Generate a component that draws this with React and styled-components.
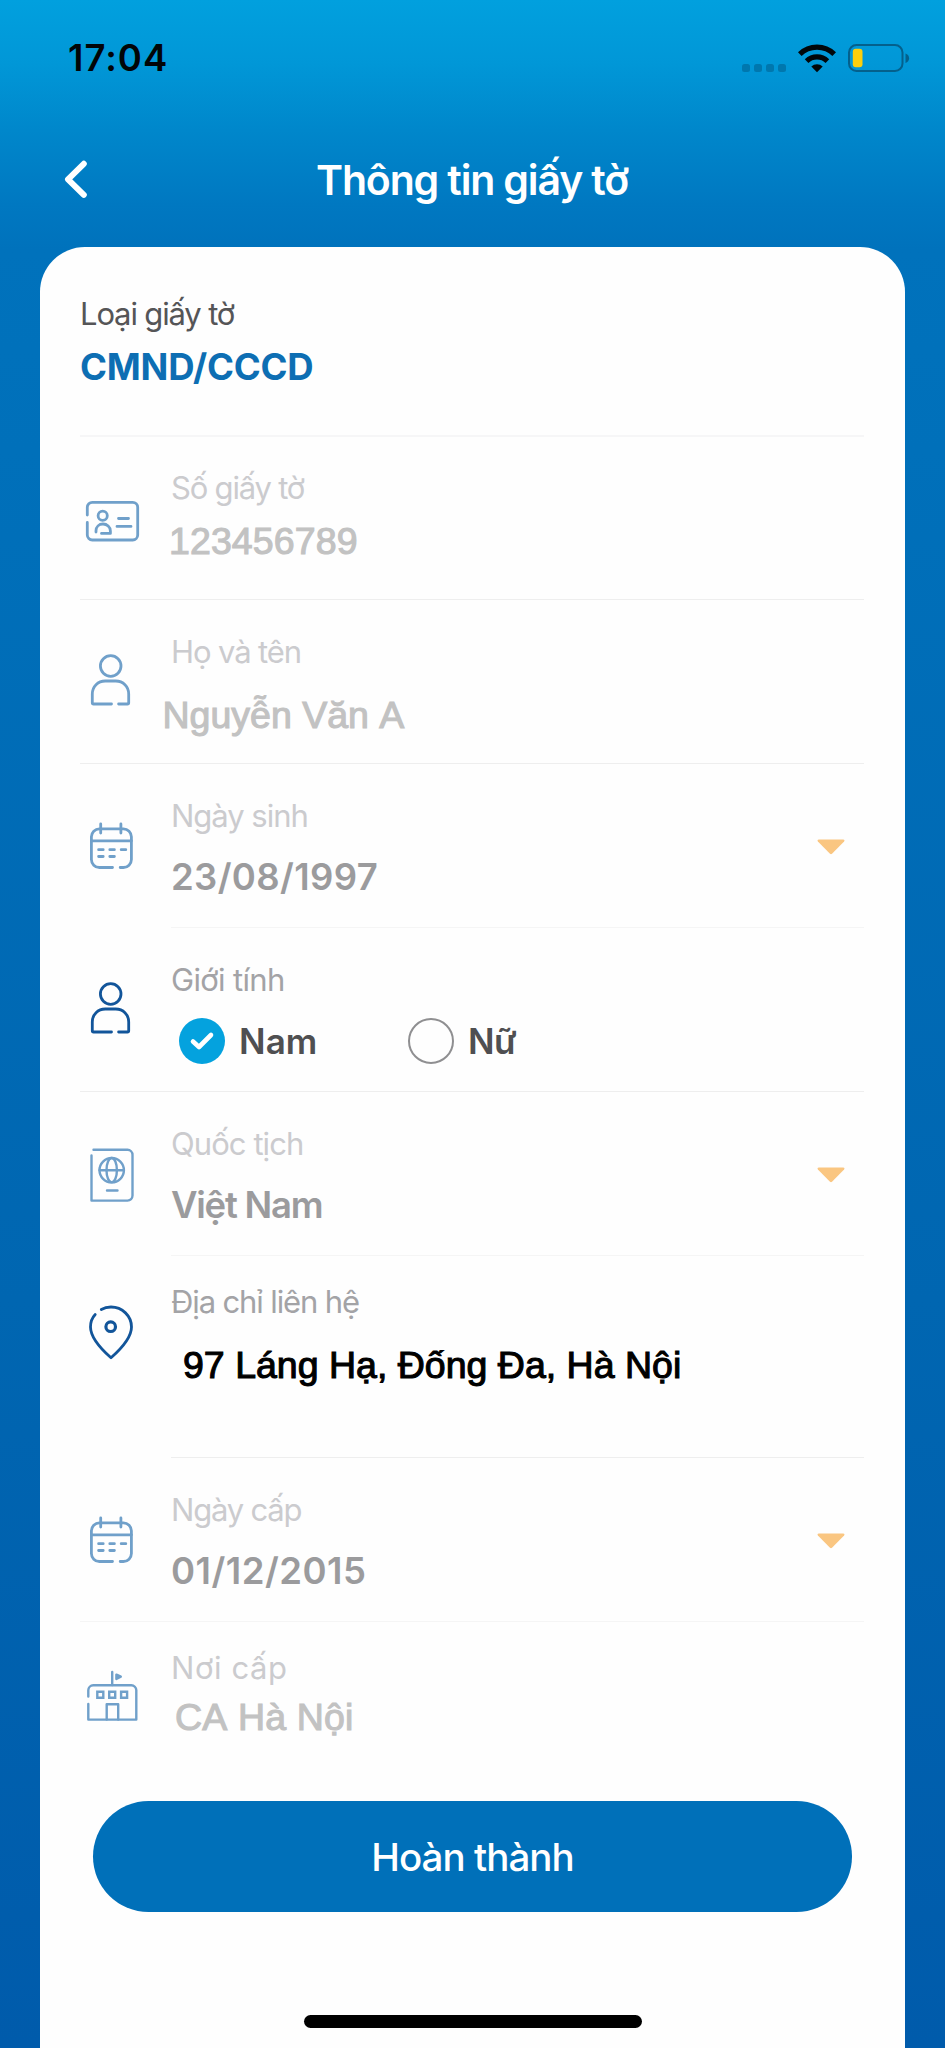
import React from "react";
import styled, { createGlobalStyle } from "styled-components";

const GlobalStyle = createGlobalStyle`
  * { box-sizing: border-box; }
  body {
    margin: 0;
    font-family: Inter, "Liberation Sans", sans-serif;
    background: #005aaa;
  }
`;

const Screen = styled.div`
  width: 945px;
  height: 2048px;
  overflow: hidden;
  display: flex;
  flex-direction: column;
  background: linear-gradient(
    180deg,
    #01a0de 0px,
    #0197d7 64px,
    #0087cb 130px,
    #0078c1 205px,
    #0072bc 250px,
    #0070ba 450px,
    #0066b1 1300px,
    #005bab 2048px
  );
`;

const StatusBar = styled.header`
  height: 116px;
  padding: 0 35px 0 68px;
  display: flex;
  align-items: center;
  justify-content: space-between;
`;

const Clock = styled.span`
  font-size: 36.5px;
  font-weight: 600;
  line-height: 44px;
  letter-spacing: 1px;
  color: #020507;
`;

const StatusIcons = styled.div`
  display: flex;
  align-items: center;
`;

const SignalDots = styled.div`
  display: flex;
  gap: 4px;
  align-self: flex-end;
  margin: 0 12px 1px 0;
`;

const Dot = styled.i`
  width: 8px;
  height: 8px;
  border-radius: 2.5px;
  background: #0077ae;
`;

const NavBar = styled.nav`
  height: 131px;
  padding: 0 0 3px 62px;
  display: grid;
  grid-template-columns: 60px 700px;
  align-items: center;
  svg { display: block; }
`;

const Title = styled.h1`
  margin: 0;
  font-size: 41px;
  font-weight: 600;
  line-height: 50px;
  letter-spacing: -1.14px;
  text-align: center;
  color: #fff;
  white-space: nowrap;
`;

const Card = styled.main`
  flex: 1;
  margin: 0 40px;
  padding: 0 41.5px 0 40px;
  border-radius: 45px 45px 0 0;
  background: #fefefe;
  display: flex;
  flex-direction: column;
`;

const DocType = styled.section`
  height: 188px;
  padding-top: 47px;
`;

const Label = styled.div`
  font-size: 31px;
  line-height: 40px;
  letter-spacing: ${(p) => p.$spacing ?? -1.12}px;
  color: ${(p) => p.$color ?? "#cbcbce"};
  white-space: nowrap;
`;

const Value = styled.div`
  margin-top: ${(p) => p.$gap}px;
  font-size: 36.5px;
  font-weight: ${(p) => p.$weight ?? 600};
  line-height: 44px;
  letter-spacing: ${(p) => p.$spacing ?? 0.35}px;
  color: ${(p) => p.$color ?? "#9b9b9d"};
  white-space: nowrap;
`;

const InputValue = styled.div`
  margin: ${(p) => p.$gap}px 0 0 ${(p) => p.$shift ?? 0}px;
  font-family: "Liberation Sans", Arial, sans-serif;
  font-size: 37.5px;
  line-height: 44px;
  letter-spacing: ${(p) => p.$spacing ?? 0}px;
  font-kerning: none;
  color: #c2c2c2;
  -webkit-text-stroke: 1.1px currentColor;
  white-space: nowrap;
`;

const AddressInput = styled(InputValue)`
  width: 498px;
  height: 47px;
  line-height: 31px;
  overflow: hidden;
  color: #000;
`;

const Divider = styled.hr`
  flex: none;
  height: ${(p) => p.$size ?? 1}px;
  margin: 0 0 0 ${(p) => (p.$inset ? 91 : 0)}px;
  border: 0;
  background: ${(p) => p.$color ?? "#eeeeee"};
`;

const Row = styled.section`
  flex: none;
  height: ${(p) => p.$height ?? 163}px;
  display: grid;
  grid-template-columns: 91px 1fr auto;
`;

const IconCell = styled.div`
  padding: ${(p) => p.$top}px 0 0 1px;
  color: ${(p) => (p.$active ? "#12559a" : "#70a0ca")};
  svg { display: block; overflow: visible; }
`;

const Field = styled.div`
  padding-top: ${(p) => p.$top ?? 32}px;
`;

const CaretCell = styled.div`
  padding: 75px 19px 0 0;
  svg { display: block; }
`;

const Options = styled.div`
  margin: 18px 0 0 8px;
  display: grid;
  grid-template-columns: 229px auto;
`;

const Option = styled.label`
  display: flex;
  align-items: center;
  gap: 14px;
  height: 46px;
  font-size: 35px;
  font-weight: 600;
  letter-spacing: ${(p) => p.$spacing}px;
  color: #4f4f51;
`;

const Radio = styled.span`
  width: 46px;
  height: 46px;
  border-radius: 50%;
  display: flex;
  align-items: center;
  justify-content: center;
  background: ${(p) => (p.$checked ? "#04a2de" : "transparent")};
  border: ${(p) => (p.$checked ? "0" : "2px solid #8f8f91")};
`;

const SubmitButton = styled.button`
  flex: none;
  width: 759px;
  height: 111px;
  margin: 0 0 0 13px;
  padding: 0;
  border: 0;
  border-radius: 56px;
  background: #0070b9;
  color: #fff;
  font: 500 38.5px/46px Inter, sans-serif;
  letter-spacing: -0.95px;
`;

const HomeIndicator = styled.div`
  flex: none;
  width: 338px;
  height: 13px;
  margin: 103px 0 0 224px;
  border-radius: 7px;
  background: #000;
`;

const LineIcon = ({ children, width = 2.8, height = 70 }) => (
  <svg
    width="60"
    height={height}
    viewBox={`0 0 60 ${height}`}
    fill="none"
    stroke="currentColor"
    strokeWidth={width}
    strokeLinecap="round"
    strokeLinejoin="round"
  >
    {children}
  </svg>
);

const CardIcon = () => (
  <LineIcon>
    <path d="M6.3 25V17.3a5 5 0 0 1 5-5H51.7a5 5 0 0 1 5 5V45a5 5 0 0 1-5 5H11.3a5 5 0 0 1-5-5V32.5" />
    <circle cx="21.7" cy="25.7" r="4.6" />
    <path d="M15 42v-1.2c0-4 3-6.8 7-6.8s7.4 3 7.4 7v2.4H20.5M37.5 28.5h10M36 36.4h14" />
  </LineIcon>
);

const PersonIcon = () => (
  <LineIcon>
    <circle cx="29.7" cy="26" r="10.3" />
    <path d="M30.5 64H12.6a1.3 1.3 0 0 1-1.3-1.3V54c0-7.5 5.6-13 13-13h10.4c7.4 0 13 5.5 13 13v8.7a1.3 1.3 0 0 1-1.3 1.3H37.6" />
  </LineIcon>
);

const CalendarIcon = () => (
  <LineIcon height={60}>
    <path d="M31.5 52.5H18.4a8 8 0 0 1-8-8V21.8a8 8 0 0 1 8-8H42.4a8 8 0 0 1 8 8V44.5a8 8 0 0 1-8 8H39.2" />
    <path d="M10.4 25.8h40M19.7 9v9M39.9 9v9" />
    <path d="M17.6 34.7h4.6M28.8 34.7h4.6M40.2 34.7h4.6M17.6 41.5h4.6M28.8 41.5h4.6" />
  </LineIcon>
);

const PassportIcon = () => (
  <LineIcon width={2.4}>
    <path d="M12.5 9.8H46.5a5 5 0 0 1 5 5V55.6a5 5 0 0 1-5 5H10.5V15.5" />
    <circle cx="30.7" cy="30.2" r="12.2" />
    <ellipse cx="30.7" cy="30.2" rx="5.2" ry="12.2" />
    <path d="M18.5 30.2h24.4M26 50.5h10.5" />
  </LineIcon>
);

const PinIcon = () => (
  <LineIcon>
    <path d="M20.3 9.5C23 7.9 26.5 7 30 7c11.3 0 20.5 9 20.5 20 0 10.5-10 21.5-20.5 30.8C19.5 48.5 9.5 37.5 9.5 27c0-4.8 1.7-9.3 4.700-12.500" />
    <circle cx="29.7" cy="26.7" r="4.8" strokeWidth="3.2" />
  </LineIcon>
);

const OfficeIcon = () => (
  <LineIcon width={2.4}>
    <path d="M7.3 36.5V30.3a5 5 0 0 1 5-5H50.3a5 5 0 0 1 5 5V59.6H7.3V44" />
    <path d="M31.2 25V12" />
    <path d="M35.4 14.6l4.4 2.1-4.4 2.2z" fill="currentColor" />
    <path d="M16.3 31.7h6v6h-6zM28.2 31.7h6v6h-6zM40.1 31.7h6v6h-6z" strokeLinejoin="miter" />
    <path d="M25.7 59.5V44.2h11.5v15.3" />
  </LineIcon>
);

const Caret = () => (
  <svg width="28" height="16" viewBox="0 0 28 16">
    <path d="M1.800.6H26.200c1.200 0 1.600 1 .9 1.800L15 14.700c-.6.6-1.400.6-2 0L.9 2.400C.2 1.600.6.6 1.800.6z" fill="#fac681" />
  </svg>
);

const WifiIcon = () => (
  <svg width="38" height="29" viewBox="0 0 38 29">
    <g fill="none" stroke="#02070a" strokeWidth="5.2">
      <path d="M1.8 10.2a24.600 24.600 0 0 1 34.400 0" />
      <path d="M8.600 17.200a14.900 14.900 0 0 1 20.800 0" />
    </g>
    <path d="M19 28.300l-5.700-5.700a8.200 8.200 0 0 1 11.400 0z" fill="#02070a" />
  </svg>
);

const BatteryBox = styled.svg`
  display: block;
  margin-left: 12px;
`;

const BatteryIcon = () => (
  <BatteryBox width="62" height="28" viewBox="0 0 62 28">
    <rect x="1" y="1" width="53.5" height="26" rx="7.5" fill="none" stroke="#04608c" strokeWidth="2" />
    <rect x="4.8" y="4.8" width="9.7" height="18.4" rx="3" fill="#fbcf0c" />
    <path d="M57.500 9.500c2.300.7 3.600 2.500 3.600 4.700s-1.300 4-3.600 4.700z" fill="#04608c" />
  </BatteryBox>
);

export default function App() {
  return (
    <>
      <GlobalStyle />
      <Screen>
        <StatusBar>
          <Clock>17:04</Clock>
          <StatusIcons>
            <SignalDots>
              <Dot />
              <Dot />
              <Dot />
              <Dot />
            </SignalDots>
            <WifiIcon />
            <BatteryIcon />
          </StatusIcons>
        </StatusBar>
        <NavBar>
          <svg width="30" height="40" viewBox="0 0 30 40" fill="none" stroke="#fff" strokeWidth="6" strokeLinecap="round" strokeLinejoin="round">
            <path d="M21.800 3.800L6 19.300l15.800 15.500" />
          </svg>
          <Title>Thông tin giấy tờ</Title>
        </NavBar>
        <Card>
          <DocType>
            <Label $color="#555557" $spacing={-1.15}>Loại giấy tờ</Label>
            <Value $gap={11} $weight={700} $spacing={-0.2} $color="#0d6eb3">CMND/CCCD</Value>
          </DocType>
          <Divider $size={2} $color="#f6f6f7" />

          <Row $height={162}>
            <IconCell $top={53}><CardIcon /></IconCell>
            <Field $top={31}>
              <Label $spacing={-1.2}>Số giấy tờ</Label>
              <InputValue $gap={11} $shift={-2} $spacing={0.1}>123456789</InputValue>
            </Field>
          </Row>
          <Divider />

          <Row>
            <IconCell $top={40}><PersonIcon /></IconCell>
            <Field>
              <Label>Họ và tên</Label>
              <InputValue $gap={21} $shift={-8.5}>Nguyễn Văn A</InputValue>
            </Field>
          </Row>
          <Divider />

          <Row>
            <IconCell $top={51}><CalendarIcon /></IconCell>
            <Field>
              <Label $spacing={-1.02}>Ngày sinh</Label>
              <Value $gap={19}>23/08/1997</Value>
            </Field>
            <CaretCell><Caret /></CaretCell>
          </Row>
          <Divider $inset $color="#f5f5f5" />

          <Row>
            <IconCell $top={40} $active><PersonIcon /></IconCell>
            <Field>
              <Label $color="#a3a3a6" $spacing={-0.67}>Giới tính</Label>
              <Options>
                <Option $spacing={0.1}>
                  <Radio $checked>
                    <svg width="26" height="20" viewBox="0 0 26 20" fill="none" stroke="#fff" strokeWidth="4.6" strokeLinecap="round" strokeLinejoin="round">
                      <path d="M4 10.5l6 5.500L22 4" />
                    </svg>
                  </Radio>
                  Nam
                </Option>
                <Option $spacing={-0.57}>
                  <Radio />
                  Nữ
                </Option>
              </Options>
            </Field>
          </Row>
          <Divider />

          <Row>
            <IconCell $top={48}><PassportIcon /></IconCell>
            <Field>
              <Label $spacing={-0.93}>Quốc tịch</Label>
              <Value $gap={19} $spacing={-1.25}>Việt Nam</Value>
            </Field>
            <CaretCell><Caret /></CaretCell>
          </Row>
          <Divider $inset $color="#f5f5f5" />

          <Row $height={201}>
            <IconCell $top={44} $active><PinIcon /></IconCell>
            <Field $top={26}>
              <Label $color="#a3a3a6">Địa chỉ liên hệ</Label>
              <AddressInput $gap={28} $shift={12}>97 Láng Hạ, Đống Đa, Hà Nội</AddressInput>
            </Field>
          </Row>
          <Divider $inset />

          <Row>
            <IconCell $top={50.5}><CalendarIcon /></IconCell>
            <Field>
              <Label $spacing={-1.2}>Ngày cấp</Label>
              <Value $gap={19} $spacing={0.48}>01/12/2015</Value>
            </Field>
            <CaretCell><Caret /></CaretCell>
          </Row>
          <Divider $color="#f5f5f5" />

          <Row $height={179}>
            <IconCell $top={38}><OfficeIcon /></IconCell>
            <Field $top={26}>
              <Label $spacing={0.58}>Nơi cấp</Label>
              <InputValue $gap={7} $shift={4} $spacing={0.15}>CA Hà Nội</InputValue>
            </Field>
          </Row>

          <SubmitButton>Hoàn thành</SubmitButton>
          <HomeIndicator />
        </Card>
      </Screen>
    </>
  );
}
